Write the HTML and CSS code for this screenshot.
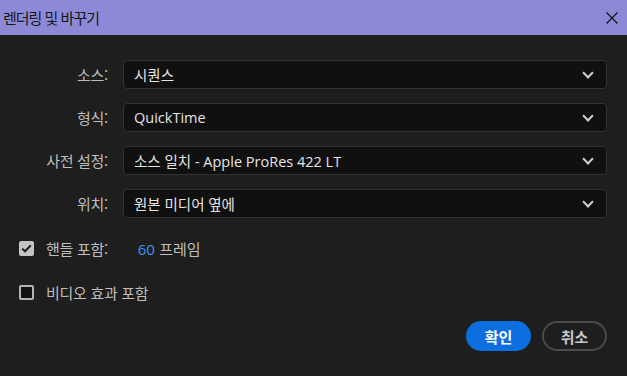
FILE: index.html
```html
<!DOCTYPE html>
<html lang="ko">
<head>
    <meta charset="UTF-8">
    <meta name="viewport" content="width=device-width, initial-scale=1.0">
    <title>렌더링 및 바꾸기</title>
    <link rel="stylesheet" href="styles.css">
</head>
<body>
    <div class="title-bar">
        <span class="title">렌더링 및 바꾸기</span>
        <svg class="close" width="12" height="12" viewBox="0 0 12 12">
            <path d="M0.5 0.5 L11.5 11.5 M11.5 0.5 L0.5 11.5" stroke="#111" stroke-width="1.2" fill="none"/>
        </svg>
    </div>

    <div class="content">
        <div class="field-list">
            <label class="field-label">소스:</label>
            <div class="select-box"><span>시퀀스</span><i class="chevron"></i></div>

            <label class="field-label">형식:</label>
            <div class="select-box"><span>QuickTime</span><i class="chevron"></i></div>

            <label class="field-label">사전 설정:</label>
            <div class="select-box"><span>소스 일치 - Apple ProRes 422 LT</span><i class="chevron"></i></div>

            <label class="field-label">위치:</label>
            <div class="select-box"><span>원본 미디어 옆에</span><i class="chevron"></i></div>
        </div>

        <div class="check-row first">
            <span class="check-box checked">
                <svg width="11" height="9" viewBox="0 0 11 9">
                    <path d="M1.2 4.6 L4 7.3 L9.8 1.4" stroke="#1c1c1c" stroke-width="2" fill="none"/>
                </svg>
            </span>
            <span class="check-text">핸들 포함:</span>
            <span class="frames"><b class="num">60</b> 프레임</span>
        </div>

        <div class="check-row">
            <span class="check-box"></span>
            <span class="check-text">비디오 효과 포함</span>
        </div>

        <div class="buttons">
            <button class="btn primary">확인</button>
            <button class="btn secondary">취소</button>
        </div>
    </div>
</body>
</html>
```

FILE: styles.css
```css
*{
    margin: 0;
    padding: 0;
    box-sizing: border-box;
}
body{
    width: 627px;
    height: 376px;
    background: #1e1e1e;
    font-family: "Noto Sans CJK KR", "Noto Sans", sans-serif;
    font-size: 15px;
    overflow: hidden;
}
.title-bar{
    height: 35px;
    background: #8c8ad6;
    display: flex;
    align-items: center;
    justify-content: space-between;
    padding: 0 9px 0 3px;
}
.title{
    color: #151515;
    font-size: 15px;
    letter-spacing: -1px;
}
.close{
    display: block;
}
.content{
    padding: 25px 20px 0 19px;
}
.field-list{
    display: grid;
    grid-template-columns: 89px 1fr;
    column-gap: 15px;
    row-gap: 14px;
    align-items: center;
}
.field-label{
    text-align: right;
    color: #bdbdbd;
    letter-spacing: -0.3px;
}
.select-box{
    height: 29px;
    background: #101010;
    border: 1px solid #323232;
    border-radius: 4px;
    display: flex;
    align-items: center;
    justify-content: space-between;
    padding: 0 12px 0 10px;
    color: #e4e4e4;
    font-family: "Open Sans", "Noto Sans CJK KR", sans-serif;
    font-size: 14.5px;
}
.chevron{
    width: 8px;
    height: 8px;
    border-right: 2.2px solid #cfcfcf;
    border-bottom: 2.2px solid #cfcfcf;
    transform: rotate(45deg);
    margin-top: -4px;
    margin-right: 2px;
}
.check-row{
    display: flex;
    align-items: center;
    height: 20px;
    margin-top: 24px;
    color: #bdbdbd;
}
.check-row.first{
    margin-top: 20px;
}
.check-box{
    width: 15px;
    height: 15px;
    border: 2px solid #b4b4b4;
    border-radius: 2px;
    background: #121212;
    display: flex;
    align-items: center;
    justify-content: center;
    margin-right: 12px;
}
.check-box.checked{
    background: #c4c4c4;
    border-color: #c4c4c4;
}
.check-text{
    letter-spacing: -0.3px;
}
.frames{
    margin-left: 30px;
}
.num{
    font-weight: normal;
    color: #3f92f2;
    font-family: "Open Sans", sans-serif;
}
.buttons{
    display: flex;
    justify-content: flex-end;
    gap: 11px;
    margin-top: 19px;
}
.btn{
    width: 65px;
    height: 30px;
    border-radius: 15px;
    font-family: "Noto Sans CJK KR", sans-serif;
    font-size: 15px;
    font-weight: bold;
}
.primary{
    background: #0d6ee0;
    border: none;
    color: #ffffff;
}
.secondary{
    background: transparent;
    border: 2px solid #4b4b4b;
    color: #c6c6c6;
}
```
